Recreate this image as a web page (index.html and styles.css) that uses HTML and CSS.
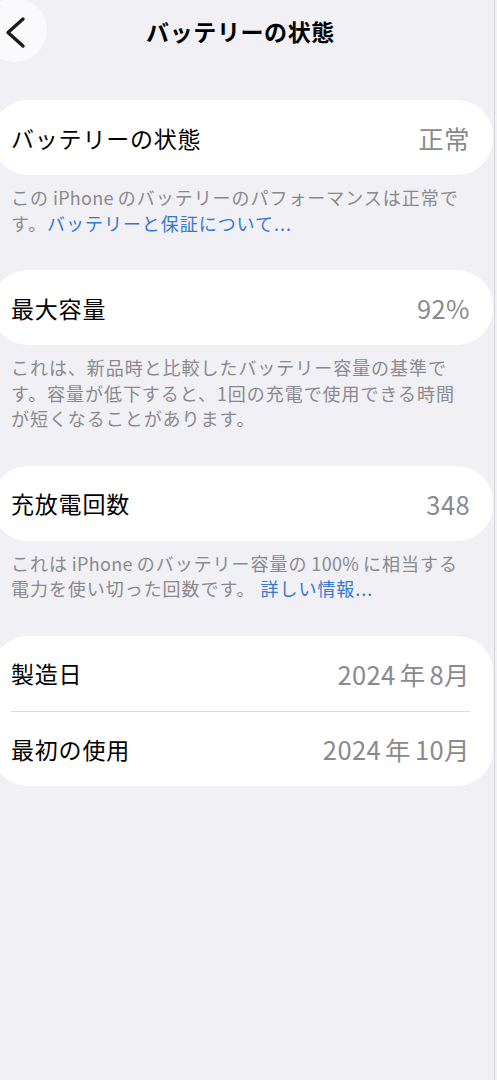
FILE: index.html
```html
<!DOCTYPE html>
<html lang="ja">
<head>
<meta charset="utf-8">
<title>バッテリーの状態</title>
<link rel="stylesheet" href="styles.css">
</head>
<body>
<div class="screen">
  <header class="nav">
    <div class="back">
      <svg width="64" height="64" viewBox="0 0 64 64" aria-hidden="true">
        <path d="M40 21 L25 34.5 L40 48" fill="none" stroke="#1c1c1e" stroke-width="3.4" stroke-linecap="round" stroke-linejoin="round"/>
      </svg>
    </div>
    <h1 class="title">バッテリーの状態</h1>
    <div></div>
  </header>

  <section class="card first">
    <div class="row"><span class="label">バッテリーの状態</span><span class="value">正常</span></div>
  </section>
  <p class="note">この<span class="latin">iPhone</span>のバッテリーのパフォーマンスは正常です。<span class="link">バッテリーと保証について...</span></p>

  <section class="card">
    <div class="row"><span class="label">最大容量</span><span class="value">92%</span></div>
  </section>
  <p class="note">これは、新品時と比較したバッテリー容量の基準です。容量が低下すると、1回の充電で使用できる時間が短くなることがあります。</p>

  <section class="card">
    <div class="row"><span class="label">充放電回数</span><span class="value">348</span></div>
  </section>
  <p class="note">これは<span class="latin">iPhone</span>のバッテリー容量の<span class="latin">100%</span>に相当する電力を使い切った回数です。 <span class="link">詳しい情報...</span></p>

  <section class="card">
    <div class="row"><span class="label">製造日</span><span class="value">2024<span class="kanji">年</span>8月</span></div>
    <div class="row divided"><span class="label">最初の使用</span><span class="value">2024<span class="kanji">年</span>10月</span></div>
  </section>
</div>
</body>
</html>
```

FILE: styles.css
```css
html, body {
  margin: 0;
  padding: 0;
  background: #f0f0f5;
  overflow-x: hidden;
}

body {
  font-family: "Noto Sans CJK JP", "Noto Sans", sans-serif;
  color: #000;
}

.screen {
  width: 494px;
  min-height: 1080px;
  border-right: 1px solid #d6d6db;
}

.nav {
  display: grid;
  grid-template-columns: 1fr auto 1fr;
  align-items: center;
  height: 62px;
  width: 497px;
  margin-left: -8px;
}

.back {
  width: 64px;
  height: 64px;
  margin-left: -9px;
  margin-top: -2px;
  border-radius: 50%;
  background: #fafafc;
  display: flex;
}

.title {
  margin: 0;
  font-size: 23px;
  font-weight: 700;
  line-height: 30px;
  letter-spacing: 0.6px;
}

.card {
  margin-left: -8px;
  width: 501px;
  background: #fff;
  border-radius: 36px;
  box-sizing: border-box;
  padding: 0 23px 0 19px;
}

.card.first {
  margin-top: 38px;
}

.row {
  display: flex;
  justify-content: space-between;
  align-items: center;
  height: 75px;
  font-size: 23px;
  letter-spacing: 0.8px;
}

.row.divided {
  border-top: 1px solid #dcdce0;
  height: 74px;
}

.value {
  color: #8a8a8e;
  font-size: 25.5px;
  letter-spacing: 0.4px;
}

.kanji {
  margin: 0 4px 0 4px;
}

.note {
  margin: 0 0 34px 0;
  padding: 10px 22px 0 11px;
  font-size: 18px;
  letter-spacing: 0.95px;
  line-height: 25.5px;
  color: #8a8a8e;
}

.latin {
  margin: 0 4px;
  letter-spacing: 0.3px;
}

.link {
  color: #3478d4;
}
```
